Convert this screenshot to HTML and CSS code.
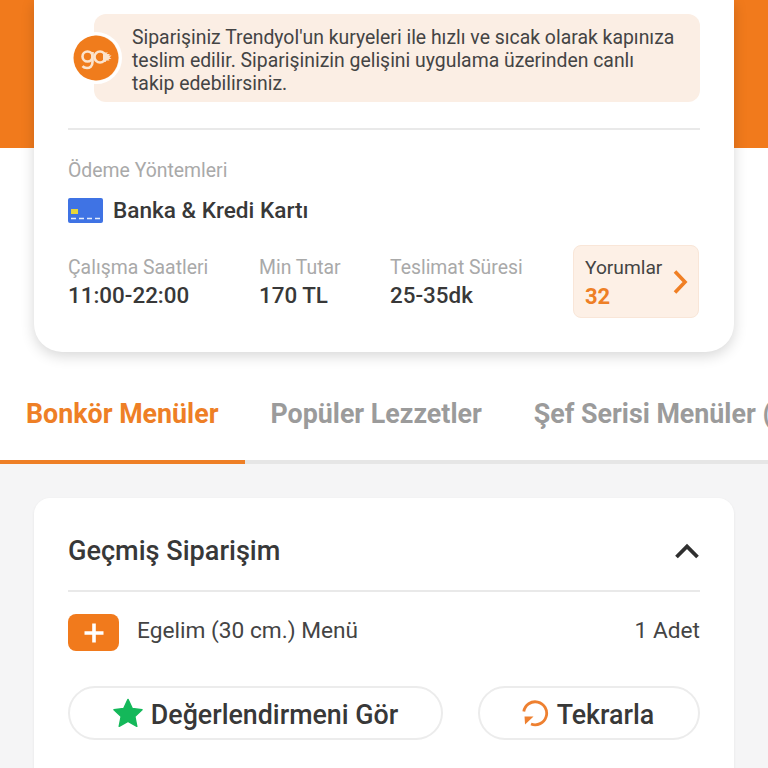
FILE: index.html
```html
<!DOCTYPE html>
<html lang="tr">
<head>
    <meta charset="UTF-8">
    <meta name="viewport" content="width=device-width, initial-scale=1.0">
    <title>Restoran</title>
    <link rel="stylesheet" href="styles.css">
</head>
<body>
    <div class="hero">
        <div class="info-card">
            <div class="go-row">
                <div class="go-badge">
                    <svg width="46" height="46" viewBox="0 0 46 46">
                        <circle cx="23" cy="23" r="22.500" fill="#f07c1c"/>
                        <g fill="none" stroke="#fbe3cd" stroke-width="2.600">
                            <circle cx="14.500" cy="21.500" r="5"/>
                            <path d="M19.500 17v10c0 4.500-3 6-5.500 6-2 0-3.500-.6-4.500-1.800"/>
                            <circle cx="27" cy="22" r="5.500"/>
                        </g>
                        <path d="M30 17.500h5l-1.500 1.500h3.500l-1.500 1.500h3l-2 2 2 1.500h-3l1 1.500h-3l-1 1.500h-2.500z" fill="#fbe3cd"/>
                    </svg>
                </div>
                <p class="go-note">Siparişiniz Trendyol'un kuryeleri ile hızlı ve sıcak olarak kapınıza teslim edilir. Siparişinizin gelişini uygulama üzerinden canlı takip edebilirsiniz.</p>
            </div>
            <hr class="line">
            <div class="muted pay-title">Ödeme Yöntemleri</div>
            <div class="pay-row">
                <svg width="35" height="25" viewBox="0 0 35 25">
                    <rect width="35" height="25" rx="2" fill="#3f73e4"/>
                    <rect x="3" y="11" width="7" height="5" fill="#e6d53a"/>
                    <path d="M3 20.500h31" stroke="#e4ecfb" stroke-width="1.500" stroke-dasharray="5 3"/>
                </svg>
                <span>Banka &amp; Kredi Kartı</span>
            </div>
            <div class="stats">
                <div class="stat stat-hours">
                    <div class="muted">Çalışma Saatleri</div>
                    <div class="stat-value">11:00-22:00</div>
                </div>
                <div class="stat stat-min">
                    <div class="muted">Min Tutar</div>
                    <div class="stat-value">170 TL</div>
                </div>
                <div class="stat stat-time">
                    <div class="muted">Teslimat Süresi</div>
                    <div class="stat-value">25-35dk</div>
                </div>
                <div class="reviews">
                    <div>
                        <div class="reviews-label">Yorumlar</div>
                        <div class="reviews-count">32</div>
                    </div>
                    <svg width="16" height="26" viewBox="0 0 16 26">
                        <path d="M3 2.500 13 13 3 23.500" fill="none" stroke="#f07f24" stroke-width="3.600"/>
                    </svg>
                </div>
            </div>
        </div>
    </div>

    <div class="tabs">
        <div class="tab active">Bonkör Menüler</div>
        <div class="tab">Popüler Lezzetler</div>
        <div class="tab">Şef Serisi Menüler (</div>
    </div>

    <div class="content">
        <div class="order-card">
            <div class="order-head">
                <span>Geçmiş Siparişim</span>
                <svg width="26" height="18" viewBox="0 0 26 18">
                    <path d="M2.500 15 13 4.500 23.500 15" fill="none" stroke="#2f2f2f" stroke-width="3.800"/>
                </svg>
            </div>
            <div class="order-item">
                <div class="plus">
                    <svg width="22" height="22" viewBox="0 0 22 22">
                        <path d="M11 1.500v19M1.500 11h19" stroke="#fff" stroke-width="3.600"/>
                    </svg>
                </div>
                <span class="item-name">Egelim (30 cm.) Menü</span>
                <span class="item-qty">1 Adet</span>
            </div>
            <div class="actions">
                <div class="btn btn-review">
                    <svg width="30" height="30" viewBox="0 0 32 32">
                        <path d="M16 1.500l4.600 9.700 10.400 1.300-7.700 7.200 2.100 10.500L16 25l-9.400 5.200 2.100-10.500L1 12.500l10.400-1.300z" fill="#14b85a" stroke="#14b85a" stroke-width="1.500" stroke-linejoin="round"/>
                    </svg>
                    <span>Değerlendirmeni Gör</span>
                </div>
                <div class="btn btn-repeat">
                    <svg width="28" height="28" viewBox="0 0 28 28">
                        <path d="M2.800 12.500A11.500 11.500 0 1 1 10 25" fill="none" stroke="#ee8030" stroke-width="2.800"/>
                        <path d="M3.500 17.500h9l-8.500 8z" fill="#ee8030"/>
                    </svg>
                    <span>Tekrarla</span>
                </div>
            </div>
        </div>
    </div>
</body>
</html>
```

FILE: styles.css
```css
html, body {
    margin: 0;
    padding: 0;
    height: 768px;
    overflow: hidden;
}

body {
    font-family: Roboto, "Liberation Sans", sans-serif;
    background-color: #f5f5f6;
    color: #333;
}

.hero {
    position: relative;
    z-index: 1;
    height: 352px;
    padding: 0 34px;
    background: linear-gradient(to bottom, #f17a1c 148px, #fff 148px);
}

.info-card {
    height: 352px;
    box-sizing: border-box;
    padding: 14px 34px 0;
    background-color: #fff;
    border-radius: 0 0 28px 28px;
    box-shadow: 0 4px 14px rgba(0, 0, 0, 0.16);
}

.go-row {
    display: flex;
    align-items: center;
}

.go-badge {
    flex: none;
    position: relative;
    width: 46px;
    height: 46px;
    margin: 0 -28px 0 2px;
    border-radius: 50%;
    border: 3px solid #fff;
}

.go-badge svg {
    display: block;
}

.go-note {
    flex: 1;
    margin: 0;
    height: 88px;
    box-sizing: border-box;
    padding: 12px 20px 0 38px;
    background-color: #fbeee4;
    border-radius: 12px;
    font-size: 19.400px;
    line-height: 23px;
    color: #444;
}

.line {
    height: 2px;
    margin: 26px 0 0;
    border: none;
    background-color: #e9e9e9;
}

.muted {
    color: #a9a9a9;
    font-size: 19.400px;
    line-height: 22px;
}

.pay-title {
    margin-top: 30px;
}

.pay-row {
    display: flex;
    align-items: center;
    gap: 10px;
    margin-top: 15px;
    font-size: 22.600px;
    font-weight: 500;
    color: #383838;
}

.stats {
    display: flex;
    margin-top: 21px;
}

.stat {
    padding-top: 12px;
}

.stat-hours {
    width: 191px;
}

.stat-min {
    width: 131px;
}

.stat-time {
    width: 183px;
}

.stat-value {
    margin-top: 3px;
    font-size: 22.400px;
    line-height: 26px;
    font-weight: 500;
    color: #383838;
}

.reviews {
    display: flex;
    align-items: center;
    justify-content: space-between;
    box-sizing: border-box;
    width: 126px;
    height: 73px;
    padding: 2px 10px 0 11px;
    background-color: #fdf0e6;
    border: 1px solid #f9e6d8;
    border-radius: 8px;
}

.reviews svg {
    margin-top: -2px;
}

.reviews-label {
    font-size: 19.200px;
    line-height: 24px;
    color: #444;
}

.reviews-count {
    margin-top: 4px;
    font-size: 22px;
    line-height: 26px;
    font-weight: 700;
    color: #ee7f26;
}

.tabs {
    display: flex;
    height: 112px;
    background-color: #fff;
    box-shadow: inset 0 -4px 0 #e6e6e6;
    white-space: nowrap;
    overflow: hidden;
}

.tab {
    flex: none;
    height: 112px;
    box-sizing: border-box;
    padding: 45px 26px 0;
    font-size: 26.800px;
    line-height: 34px;
    font-weight: 700;
    color: #9b9b9b;
}

.tab.active {
    color: #ee7f26;
    border-bottom: 4px solid #ee7f26;
}

.content {
    padding: 34px 34px 0;
}

.order-card {
    height: 300px;
    box-sizing: border-box;
    padding: 0 34px;
    background-color: #fff;
    border-radius: 16px;
    box-shadow: 0 1px 3px rgba(0, 0, 0, 0.07);
}

.order-head {
    display: flex;
    align-items: center;
    justify-content: space-between;
    height: 94px;
    box-sizing: border-box;
    padding-top: 14px;
    border-bottom: 2px solid #e9e9e9;
    font-size: 27.100px;
    font-weight: 500;
    color: #383838;
}

.order-item {
    display: flex;
    align-items: center;
    margin-top: 22px;
    font-size: 22.700px;
    color: #444;
}

.item-name, .item-qty {
    margin-bottom: 5px;
}

.plus {
    display: flex;
    align-items: center;
    justify-content: center;
    width: 51px;
    height: 37px;
    margin-right: 18px;
    background-color: #f17a1c;
    border-radius: 8px;
}

.item-qty {
    margin-left: auto;
}

.actions {
    display: flex;
    justify-content: space-between;
    margin-top: 35px;
}

.btn {
    display: flex;
    align-items: center;
    justify-content: center;
    gap: 8px;
    height: 54px;
    box-sizing: border-box;
    background-color: #fff;
    border: 2px solid #ececec;
    border-radius: 27px;
    font-size: 26.800px;
    font-weight: 500;
    color: #383838;
}

.btn span {
    margin-top: 3px;
}

.btn-review {
    width: 375px;
}

.btn-repeat {
    width: 222px;
    padding-right: 3px;
}
```
